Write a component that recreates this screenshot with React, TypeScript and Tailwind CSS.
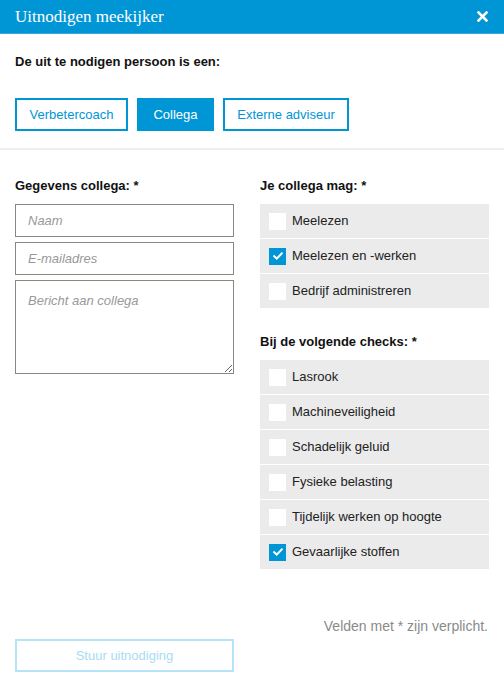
import { useState } from 'react';

const ROLES = ['Verbetercoach', 'Collega', 'Externe adviseur'];
const RIGHTS = ['Meelezen', 'Meelezen en -werken', 'Bedrijf administreren'];
const CHECKS = [
  'Lasrook',
  'Machineveiligheid',
  'Schadelijk geluid',
  'Fysieke belasting',
  'Tijdelijk werken op hoogte',
  'Gevaarlijke stoffen',
];

const CheckRow = ({ label, checked, onToggle }: { label: string; checked: boolean; onToggle: () => void }) => (
  <button
    type="button"
    onClick={onToggle}
    className="flex h-[34px] w-full items-center bg-[#ebebeb] pl-[9px] text-left"
  >
    <span
      className={`flex h-[17px] w-[17px] shrink-0 items-center justify-center ${checked ? 'bg-[#0096d6]' : 'bg-white'}`}
    >
      {checked && (
        <svg width="10" height="8" viewBox="0 0 10 8" fill="none">
          <path d="M1.2 4.2 L3.8 6.6 L8.8 1.4" stroke="white" strokeWidth="2" strokeLinecap="square" />
        </svg>
      )}
    </span>
    <span className="ml-[6px] text-[13px] text-[#222]">{label}</span>
  </button>
);

export default function App() {
  const [role, setRole] = useState('Collega');
  const [rights, setRights] = useState<string[]>(['Meelezen en -werken']);
  const [checks, setChecks] = useState<string[]>(['Gevaarlijke stoffen']);

  const toggle = (list: string[], set: (v: string[]) => void, item: string) =>
    set(list.includes(item) ? list.filter((i) => i !== item) : [...list, item]);

  return (
    <div className="min-h-[687px] w-[504px] bg-white font-['Liberation_Sans',Arial,sans-serif] text-[#111]">
      {/* header */}
      <div className="flex h-[34px] items-center justify-between bg-[#0096d6] pl-[15px] pr-[16px] border-b border-[#33abe0]">
        <h1 className="font-['Liberation_Serif','Times_New_Roman',serif] text-[17px] text-white">Uitnodigen meekijker</h1>
        <svg width="11" height="11" viewBox="0 0 11 11">
          <path d="M1.5 1.5 L9.5 9.5 M9.5 1.5 L1.5 9.5" stroke="white" strokeWidth="2.6" strokeLinecap="square" />
        </svg>
      </div>

      <div className="px-[15px] pt-[20px]">
        <p className="text-[13px] font-bold leading-[16px]">De uit te nodigen persoon is een:</p>
        <div className="mt-[28px] flex gap-[9px]">
          {ROLES.map((r) => (
            <button
              key={r}
              type="button"
              onClick={() => setRole(r)}
              className={`h-[33px] border-2 border-[#0096d6] text-[13px] ${
                r === 'Verbetercoach' ? 'w-[113px]' : r === 'Collega' ? 'w-[77px]' : 'w-[126px]'
              } ${role === r ? 'bg-[#0096d6] text-white' : 'bg-white text-[#0096d6]'}`}
            >
              {r}
            </button>
          ))}
        </div>
      </div>

      <div className="mt-[17px] h-[2px] bg-[#eeeeee]" />

      <div className="grid grid-cols-[219px_229px] gap-x-[26px] px-[15px] pt-[28px]">
        <div>
          <p className="text-[13px] font-bold leading-[16px]">Gegevens collega: *</p>
          <div className="mt-[10px] flex flex-col gap-[5px]">
            <input
              placeholder="Naam"
              className="h-[33px] border border-[#8c8680] px-[12px] text-[13px] italic outline-none placeholder:text-[#999]"
            />
            <input
              placeholder="E-mailadres"
              className="h-[33px] border border-[#8c8680] px-[12px] text-[13px] italic outline-none placeholder:text-[#999]"
            />
            <textarea
              placeholder="Bericht aan collega"
              className="h-[94px] border border-[#8c8680] px-[12px] py-[10px] text-[13px] italic outline-none placeholder:text-[#999]"
            />
          </div>
        </div>

        <div>
          <p className="text-[13px] font-bold leading-[16px]">Je collega mag: *</p>
          <div className="mt-[10px] flex flex-col gap-px">
            {RIGHTS.map((r) => (
              <CheckRow key={r} label={r} checked={rights.includes(r)} onToggle={() => toggle(rights, setRights, r)} />
            ))}
          </div>

          <p className="mt-[26px] text-[13px] font-bold leading-[16px]">Bij de volgende checks: *</p>
          <div className="mt-[10px] flex flex-col gap-px">
            {CHECKS.map((c) => (
              <CheckRow key={c} label={c} checked={checks.includes(c)} onToggle={() => toggle(checks, setChecks, c)} />
            ))}
          </div>
        </div>
      </div>

      <div className="px-[15px] pt-[49px]">
        <p className="text-right text-[14px] leading-[16px] text-[#8a8a8a] pr-px">Velden met * zijn verplicht.</p>
        <button
          type="button"
          disabled
          className="mt-[5px] h-[33px] w-[219px] border-2 border-[#b5e3f7] text-[13px] text-[#a9dcf3]"
        >
          Stuur uitnodiging
        </button>
      </div>
    </div>
  );
}
